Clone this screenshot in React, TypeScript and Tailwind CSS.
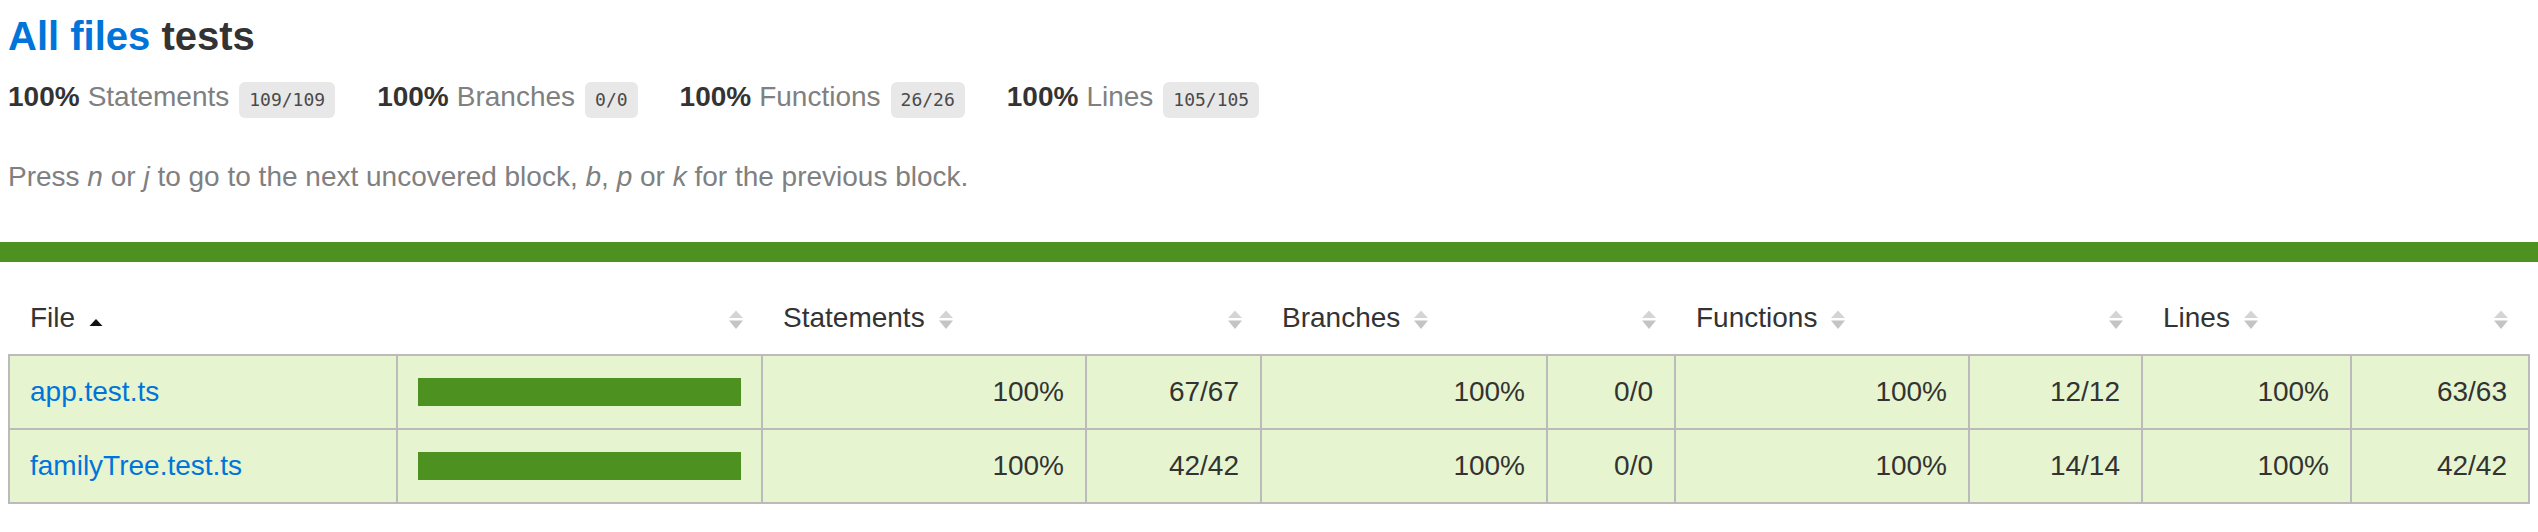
import type { ReactElement, ReactNode } from "react";

type Row = {
  file: string;
  statements: string;
  branches: string;
  functions: string;
  lines: string;
};

const rows: Row[] = [
  { file: "app.test.ts", statements: "67/67", branches: "0/0", functions: "12/12", lines: "63/63" },
  { file: "familyTree.test.ts", statements: "42/42", branches: "0/0", functions: "14/14", lines: "42/42" },
];

const summary = [
  { label: "Statements", fraction: "109/109" },
  { label: "Branches", fraction: "0/0" },
  { label: "Functions", fraction: "26/26" },
  { label: "Lines", fraction: "105/105" },
];

function Sorter({ sorted, spaced = true }: { sorted?: boolean; spaced?: boolean }): ReactElement {
  return (
    <svg
      width="14"
      height="20"
      viewBox="0 0 14 20"
      className={spaced ? "inline-block ml-[14px]" : "inline-block"}
    >
      {sorted ? (
        <path d="M7 9 L13.5 16 L0.5 16 Z" fill="#111" />
      ) : (
        <>
          <path d="M7 0.5 L14 8 L0 8 Z" fill="#d4d4d4" />
          <path d="M0 10.5 L14 10.5 L7 19 Z" fill="#c4c4c4" />
        </>
      )}
    </svg>
  );
}

function Th({ children, right }: { children?: ReactNode; right?: boolean }): ReactElement {
  return (
    <div
      className={
        right
          ? "px-[20px] py-[20px] leading-[32px] text-right whitespace-nowrap"
          : "px-[20px] py-[20px] leading-[32px] text-left whitespace-nowrap"
      }
    >
      {children}
    </div>
  );
}

function Td({
  children,
  first,
  last,
  right,
}: {
  children?: ReactNode;
  first?: boolean;
  last?: boolean;
  right?: boolean;
}): ReactElement {
  const base = "flex items-center px-[20px] leading-[32px] bg-[#e6f5d0] border-[#bbbbbb]";
  const h = first ? " h-[74px] border-b-2" : " h-[72px]";
  const r = last ? "" : " border-r-2";
  const j = right ? " justify-end pr-[21px]" : "";
  return <div className={base + h + r + j}>{children}</div>;
}

export default function App(): ReactElement {
  return (
    <div className="min-h-screen bg-white text-[28px] text-[#333333] font-['Liberation_Sans',Arial,sans-serif]">
      <div className="px-[8px] pt-[13px]">
        <h1 className="text-[40px] leading-[46px] font-bold">
          <a className="text-[#0074d9]">All files</a> tests
        </h1>

        <div className="flex items-start mt-[22px]">
          {summary.map((s) => (
            <div key={s.label} className="flex items-start mr-[42px] leading-[32px]">
              <span className="font-bold">100%</span>
              <span className="ml-[8px] text-[#808080]">{s.label}</span>
              <span className="ml-[10px] mt-[1px] rounded-[6px] bg-[#e8e8e8] px-[10px] py-[6px] text-[18px] leading-[24px] text-[#4a4a4a] font-['DejaVu_Sans_Mono',monospace]">
                {s.fraction}
              </span>
            </div>
          ))}
        </div>

        <p className="mt-[43px] leading-[32px] text-[#808080]">
          Press <em>n</em> or <em>j</em> to go to the next uncovered block, <em>b</em>, <em>p</em> or{" "}
          <em>k</em> for the previous block.
        </p>
      </div>

      <div className="mt-[49px] h-[20px] bg-[#4d9221]" />

      <div className="px-[8px] pt-[20px]">
        <div className="grid grid-cols-[388px_365px_324px_175px_286px_128px_294px_173px_209px_176px] border-x-2 border-transparent">
          <Th>
            File
            <Sorter sorted />
          </Th>
          <Th right>
            <Sorter spaced={false} />
          </Th>
          <Th>
            Statements
            <Sorter />
          </Th>
          <Th right>
            <Sorter spaced={false} />
          </Th>
          <Th>
            Branches
            <Sorter />
          </Th>
          <Th right>
            <Sorter spaced={false} />
          </Th>
          <Th>
            Functions
            <Sorter />
          </Th>
          <Th right>
            <Sorter spaced={false} />
          </Th>
          <Th>
            Lines
            <Sorter />
          </Th>
          <Th right>
            <Sorter spaced={false} />
          </Th>
        </div>

        <div className="grid grid-cols-[388px_365px_324px_175px_286px_128px_294px_173px_209px_176px] border-2 border-[#bbbbbb]">
          {rows.map((row, i) => {
            const first = i === 0;
            return [
              <Td key={row.file + "-file"} first={first}>
                <a className="text-[#0074d9] whitespace-nowrap">{row.file}</a>
              </Td>,
              <Td key={row.file + "-pic"} first={first}>
                <div className="h-[28px] w-full bg-[#4d9221]" />
              </Td>,
              <Td key={row.file + "-sp"} first={first} right>100%</Td>,
              <Td key={row.file + "-sa"} first={first} right>{row.statements}</Td>,
              <Td key={row.file + "-bp"} first={first} right>100%</Td>,
              <Td key={row.file + "-ba"} first={first} right>{row.branches}</Td>,
              <Td key={row.file + "-fp"} first={first} right>100%</Td>,
              <Td key={row.file + "-fa"} first={first} right>{row.functions}</Td>,
              <Td key={row.file + "-lp"} first={first} right>100%</Td>,
              <Td key={row.file + "-la"} first={first} right last>{row.lines}</Td>,
            ];
          })}
        </div>
      </div>
    </div>
  );
}
